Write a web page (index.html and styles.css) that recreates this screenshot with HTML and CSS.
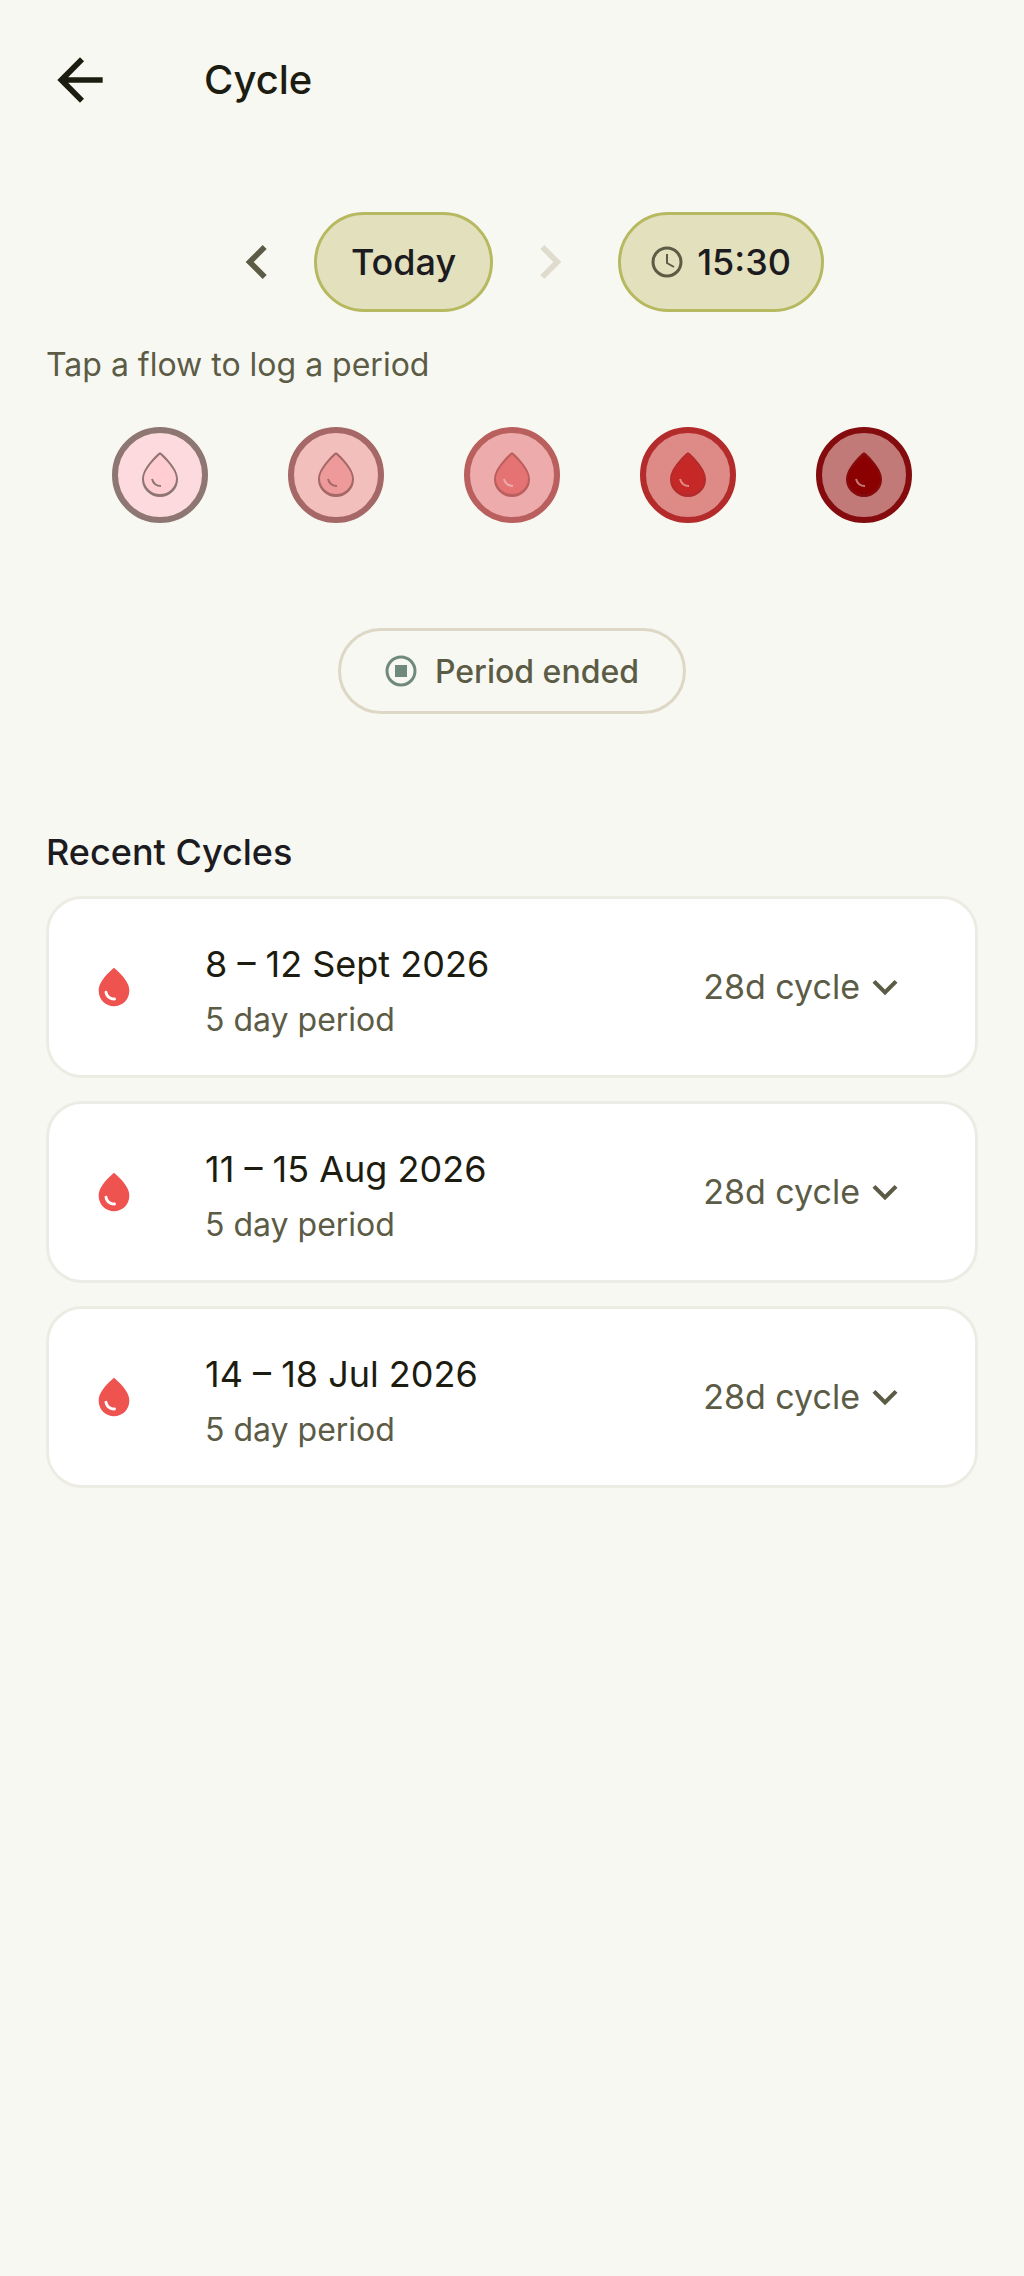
FILE: index.html
```html
<!DOCTYPE html>
<html lang="en">

<head>
    <meta charset="UTF-8">
    <meta name="viewport" content="width=device-width, initial-scale=1.0">
    <title>Cycle</title>
    <link rel="stylesheet" href="styles.css">
</head>

<body>
    <!-- Shared icon shapes -->
    <svg class="icon-defs" aria-hidden="true">
        <symbol id="icon-drop" viewBox="0 0 24 24">
            <path d="M12 2c-5.33 4.55-8 8.48-8 11.8 0 4.98 3.8 8.2 8 8.2s8-3.22 8-8.2c0-3.32-2.67-7.25-8-11.8zM7.83 14c.37 0 .67.26.74.62.41 2.22 2.28 2.98 3.64 2.87.43-.02.79.32.79.75 0 .4-.32.73-.72.75-2.13.13-4.62-1.09-5.19-4.12-.08-.45.28-.87.74-.87z" />
        </symbol>
        <symbol id="icon-flow" viewBox="0 0 48 56">
            <path class="flow-fill" d="M24 7C13 17 7 25 7 32.500a17 17 0 0 0 34 0C41 25 35 17 24 7z" />
            <path class="flow-line" fill-rule="evenodd" d="M24 5.500C23 5.500 22.500 6 21.500 7C12 16 6 24.500 6 32.500a18 17.500 0 0 0 36 0C42 24.500 36 16 26.500 7C25.500 6 25 5.500 24 5.500zM24 7.500C34 17 40 25 40 31.500a16 15.500 0 0 1-32 0C8 25 14 17 24 7.500z" />
            <path class="flow-shine" d="M16 32q2 7 9 7" />
        </symbol>
        <symbol id="icon-expand" viewBox="0 0 24 24">
            <path d="M16.590 8.590L12 13.170 7.410 8.590 6 10l6 6 6-6z" />
        </symbol>
    </svg>

    <header class="top-bar">
        <button type="button" class="back-button" aria-label="Back">
            <svg class="icon-large" viewBox="0 0 24 24" aria-hidden="true">
                <path d="M20 11H7.830l5.590-5.590L12 4l-8 8 8 8 1.410-1.410L7.830 13H20z" />
            </svg>
        </button>
        <h1>Cycle</h1>
    </header>

    <main>
        <div class="date-row">
            <button type="button" class="step-button" aria-label="Previous day">
                <svg class="icon-large" viewBox="0 0 24 24" aria-hidden="true">
                    <path d="M15.410 7.410L14 6l-6 6 6 6 1.410-1.410L10.830 12z" />
                </svg>
            </button>
            <button type="button" class="pill">Today</button>
            <button type="button" class="step-button" aria-label="Next day" disabled>
                <svg class="icon-large" viewBox="0 0 24 24" aria-hidden="true">
                    <path d="M8.590 16.590L13.170 12 8.590 7.410 10 6l6 6-6 6z" />
                </svg>
            </button>
            <button type="button" class="pill pill-time">
                <svg class="icon-clock" viewBox="0 0 32 32" aria-hidden="true">
                    <circle cx="16" cy="16" r="14" />
                    <path d="M16 8v9l7 4" />
                </svg>
                15:30
            </button>
        </div>

        <p class="hint">Tap a flow to log a period</p>

        <div class="flow-row">
            <button type="button" class="flow flow-spotting" aria-label="Spotting"><svg aria-hidden="true"><use href="#icon-flow" /></svg></button>
            <button type="button" class="flow flow-light" aria-label="Light"><svg aria-hidden="true"><use href="#icon-flow" /></svg></button>
            <button type="button" class="flow flow-medium" aria-label="Medium"><svg aria-hidden="true"><use href="#icon-flow" /></svg></button>
            <button type="button" class="flow flow-heavy" aria-label="Heavy"><svg aria-hidden="true"><use href="#icon-flow" /></svg></button>
            <button type="button" class="flow flow-very-heavy" aria-label="Very heavy"><svg aria-hidden="true"><use href="#icon-flow" /></svg></button>
        </div>

        <button type="button" class="end-button">
            <svg class="icon-stop" viewBox="0 0 32 32" aria-hidden="true">
                <circle cx="16" cy="16" r="14" />
                <rect x="10" y="10" width="12" height="12" />
            </svg>
            Period ended
        </button>

        <section>
            <h2>Recent Cycles</h2>
            <div class="cycle-list">
                <button type="button" class="cycle" aria-expanded="false">
                    <svg class="cycle-drop" aria-hidden="true"><use href="#icon-drop" /></svg>
                    <span class="cycle-text">
                        <span class="cycle-dates">8 – 12 Sept 2026</span>
                        <span class="cycle-period">5 day period</span>
                    </span>
                    <span class="cycle-length">28d cycle</span>
                    <svg class="cycle-expand" aria-hidden="true"><use href="#icon-expand" /></svg>
                </button>
                <button type="button" class="cycle" aria-expanded="false">
                    <svg class="cycle-drop" aria-hidden="true"><use href="#icon-drop" /></svg>
                    <span class="cycle-text">
                        <span class="cycle-dates">11 – 15 Aug 2026</span>
                        <span class="cycle-period">5 day period</span>
                    </span>
                    <span class="cycle-length">28d cycle</span>
                    <svg class="cycle-expand" aria-hidden="true"><use href="#icon-expand" /></svg>
                </button>
                <button type="button" class="cycle" aria-expanded="false">
                    <svg class="cycle-drop" aria-hidden="true"><use href="#icon-drop" /></svg>
                    <span class="cycle-text">
                        <span class="cycle-dates">14 – 18 Jul 2026</span>
                        <span class="cycle-period">5 day period</span>
                    </span>
                    <span class="cycle-length">28d cycle</span>
                    <svg class="cycle-expand" aria-hidden="true"><use href="#icon-expand" /></svg>
                </button>
            </div>
        </section>
    </main>
</body>

</html>
```

FILE: styles.css
```css
* {
    box-sizing: border-box;
}

body {
    margin: 0;
    padding: 0 46px;
    min-height: 100vh;
    background-color: #f8f8f2;
    color: #1c1b1f;
    font-family: Inter, "Open Sans", sans-serif;
}

button {
    margin: 0;
    padding: 0;
    border: none;
    background: none;
    color: inherit;
    font: inherit;
    cursor: pointer;
}

svg {
    display: block;
    flex: none;
    fill: currentColor;
}

.icon-defs {
    display: none;
}

.icon-large {
    width: 68px;
    height: 68px;
}

/* Header */
.top-bar {
    display: flex;
    align-items: center;
    gap: 90px;
    height: 160px;
    color: #1c1c10;
}

h1 {
    margin: 0;
    font-size: 40px;
    font-weight: 500;
    line-height: 48px;
}

/* Date and time */
.date-row {
    display: flex;
    justify-content: center;
    margin-top: 52px;
}

.step-button {
    display: flex;
    align-items: center;
    justify-content: center;
    width: 114px;
    color: #5c5c46;
}

.step-button:disabled {
    color: #dfdbcd;
    cursor: default;
}

.pill {
    height: 100px;
    padding: 0 34px;
    border: 3px solid #b6b95f;
    border-radius: 50px;
    background-color: #e3e0bd;
    font-size: 36px;
    font-weight: 500;
}

.pill-time {
    display: flex;
    align-items: center;
    gap: 14px;
    margin-left: 11px;
    padding: 0 30px;
}

.icon-clock,
.icon-stop {
    width: 32px;
    height: 32px;
    fill: none;
    stroke: #5c5c46;
    stroke-width: 3;
}

.icon-clock path {
    stroke-width: 2;
}

.hint {
    margin: 33px 0 42px;
    color: #5c5c46;
    font-size: 32px;
    line-height: 40px;
}

/* Flow picker */
.flow-row {
    display: flex;
    justify-content: center;
    gap: 80px;
}

.flow {
    display: flex;
    align-items: center;
    justify-content: center;
    width: 96px;
    height: 96px;
    border: 6px solid var(--line);
    border-radius: 50%;
    background-color: var(--tint);
}

.flow svg {
    width: 48px;
    height: 56px;
}

.flow-fill {
    fill: var(--drop);
}

.flow-line {
    fill: var(--line);
}

.flow-shine {
    fill: none;
    stroke: var(--shine);
    stroke-width: 2;
}

.flow-spotting {
    --tint: #fddadd;
    --drop: #ffcdd2;
    --line: #8e7673;
    --shine: #8e7673;
}

.flow-light {
    --tint: #f2bfbc;
    --drop: #ef9a9a;
    --line: #a56866;
    --shine: #a56866;
}

.flow-medium {
    --tint: #edabab;
    --drop: #e57373;
    --line: #b9605f;
    --shine: #edabab;
}

.flow-heavy {
    --tint: #de8a86;
    --drop: #c62828;
    --line: #b32c2b;
    --shine: #de8a86;
}

.flow-very-heavy {
    --tint: #c27a78;
    --drop: #8b0000;
    --line: #850c0e;
    --shine: #c27a78;
}

.end-button {
    display: flex;
    align-items: center;
    gap: 18px;
    height: 86px;
    margin: 105px auto 0;
    padding: 0 44px;
    border: 3px solid #ddd8c6;
    border-radius: 43px;
    color: #5c5c46;
    font-size: 32px;
    font-weight: 500;
}

.icon-stop {
    stroke: #70897e;
}

.icon-stop rect {
    fill: #70897e;
    stroke: none;
}

/* Recent cycles */
h2 {
    margin: 116px 0 22px;
    font-size: 36px;
    font-weight: 500;
    line-height: 44px;
}

.cycle-list {
    display: flex;
    flex-direction: column;
    gap: 23px;
}

.cycle {
    display: flex;
    align-items: center;
    width: 100%;
    min-height: 182px;
    padding: 0 65px 0 42px;
    border: 3px solid #edece4;
    border-radius: 36px;
    background-color: #fff;
    text-align: left;
}

.cycle-drop {
    width: 46px;
    height: 46px;
    color: #ef5350;
}

.cycle-text {
    display: flex;
    flex: 1;
    flex-direction: column;
    gap: 14px;
    margin-left: 68px;
    padding-top: 8px;
}

.cycle-dates {
    color: #1c1c10;
    font-size: 36px;
    line-height: 44px;
}

.cycle-period,
.cycle-length {
    color: #5c5c46;
    font-size: 32px;
    line-height: 40px;
}

.cycle-length {
    font-size: 34px;
}

.cycle-expand {
    width: 50px;
    height: 50px;
    color: #5c5c46;
}
```
